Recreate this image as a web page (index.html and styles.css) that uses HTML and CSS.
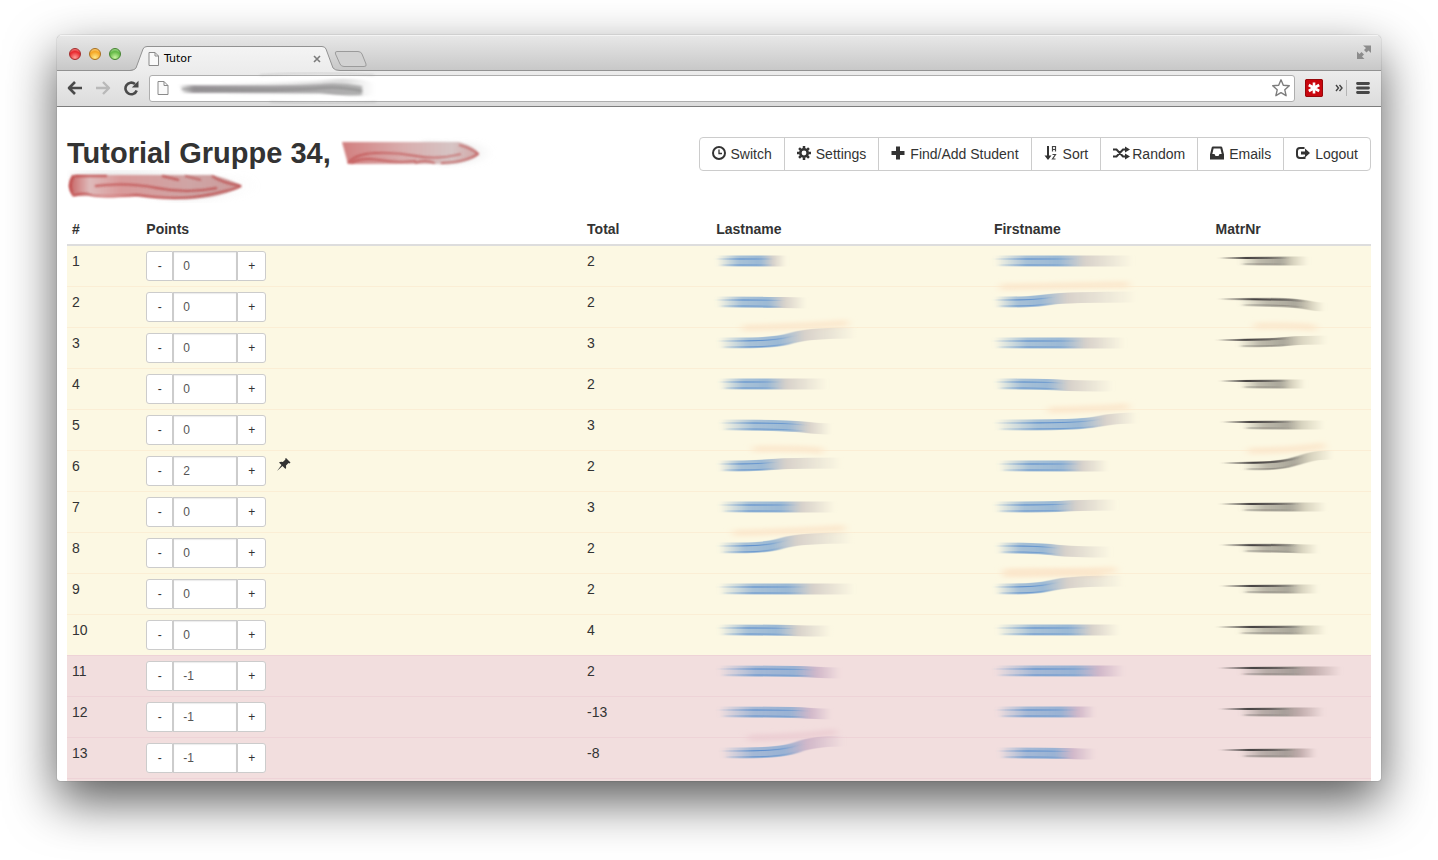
FILE: index.html
```html
<!DOCTYPE html>
<html lang="de">
<head>
<meta charset="utf-8">
<title>Tutor</title>
<link rel="stylesheet" href="styles.css">
</head>
<body>
<div class="window">
  <div class="titlebar">
    <div class="lights">
      <button class="light red" aria-label="Close"></button>
      <button class="light amber" aria-label="Minimize"></button>
      <button class="light green" aria-label="Zoom"></button>
    </div>
    <div class="tab">
      <svg class="tab-shape" width="210" height="25" viewBox="0 0 210 25" aria-hidden="true">
        <defs><linearGradient id="tabfill" x2="0" y2="1"><stop stop-color="#f4f4f4"/><stop offset="1" stop-color="#ececec"/></linearGradient></defs>
        <path d="M0 25 Q5 24 6 22 L13 3 Q14 .5 17 .5 H192 Q195 .5 196 3 L203 22 Q205 24.500 210 24.500 V25Z" fill="url(#tabfill)"/>
        <path d="M0 24.500 Q5 24 6 22 L13 3 Q14 .5 17 .5 H192 Q195 .5 196 3 L203 22 Q205 24.500 210 24.500" fill="none" stroke="#929292"/>
      </svg>
      <svg class="page-icon" width="12" height="14" viewBox="0 0 12 14" aria-hidden="true"><path d="M1 .5H7L10.500 4V13.500H1Z" fill="#fafafa" stroke="#8a8a8a"/><path d="M7 .5V4H10.500" fill="none" stroke="#8a8a8a"/></svg>
      <span class="tab-title">Tutor</span>
      <button class="tab-close" aria-label="Close tab"><svg width="8" height="8" viewBox="0 0 8 8"><path d="M1 1L7 7M7 1L1 7" stroke="#7b7b7b" stroke-width="1.600"/></svg></button>
    </div>
    <button class="new-tab" aria-label="New tab"><svg width="34" height="17" viewBox="0 0 34 17"><path d="M3 .5H24Q27 .5 28 3L32 13Q33 15.500 30 15.500H10Q7 15.500 6 13L1.500 3Q.5 .5 3 .5Z" fill="#d2d2d2" stroke="#9b9b9b"/></svg></button>
    <button class="full" aria-label="Full screen"><svg width="16" height="16" viewBox="0 0 16 16"><path d="M7 1.500H15V9L12.500 6.500L10.500 8.500L8 6L10 4ZM1 7.500L3.500 10L5.500 8L8 10.500L6 12.500L8.500 15H1Z" fill="#8c8c8c"/></svg></button>
  </div>
  <div class="toolbar">
    <button class="nav" aria-label="Back"><svg width="16" height="16" viewBox="0 0 16 16"><path d="M15 8H2.500M8 2L2 8L8 14" fill="none" stroke="#4a4a4a" stroke-width="2.600" stroke-linejoin="round"/></svg></button>
    <button class="nav" aria-label="Forward"><svg width="16" height="16" viewBox="0 0 16 16"><path d="M1 8H13.500M8 2L14 8L8 14" fill="none" stroke="#b9b9b9" stroke-width="2.400" stroke-linejoin="round"/></svg></button>
    <button class="nav" aria-label="Reload"><svg width="16" height="16" viewBox="0 0 16 16"><path d="M12 4A5.800 5.800 0 1 0 13.700 10.500" fill="none" stroke="#4a4a4a" stroke-width="2.600"/><path d="M15.500 .8V7.500H8.800Z" fill="#4a4a4a"/></svg></button>
    <div class="omnibox">
      <svg class="url-icon" width="12" height="16" viewBox="0 0 12 16" aria-hidden="true"><path d="M1 1.500H7L11 5.500V14.500H1Z" fill="#fafafa" stroke="#8a8a8a"/><path d="M7 1.500V5.500H11" fill="none" stroke="#8a8a8a"/></svg>
      <input class="url" type="text" aria-label="Address">
      <svg class="url-smear" width="215" height="32" viewBox="0 0 215 32" aria-hidden="true">
        <defs>
          <linearGradient id="us"><stop stop-color="#888" stop-opacity="0"/><stop offset=".08" stop-color="#9b979b"/><stop offset="1" stop-color="#b0b0b0"/></linearGradient>
          <linearGradient id="uf"><stop stop-color="#bbb" stop-opacity="0"/><stop offset=".8" stop-color="#bbb" stop-opacity=".5"/><stop offset="1" stop-color="#bbb" stop-opacity="0"/></linearGradient>
          <filter id="ub" filterUnits="userSpaceOnUse" x="0" y="-4" width="220" height="42"><feGaussianBlur stdDeviation="1.500 .9"/></filter>
        </defs>
        <path d="M45 10Q130 11 165 7Q195 6 205 12V23Q185 26 165 22L60 23Z" fill="url(#uf)" filter="url(#ub)"/>
        <path d="M90 3Q150 -1 204 3M100 30Q160 33 206 30" stroke="#999" stroke-opacity=".5" fill="none" filter="url(#ub)"/>
        <path d="M9 13Q120 14 150 12Q170 10 192 14V23Q170 24 150 21L13 21Z" fill="url(#us)" filter="url(#ub)"/>
        <path d="M12 17Q120 19 150 16Q170 14 192 19" stroke="#828282" stroke-opacity=".6" stroke-width="2" fill="none" filter="url(#ub)"/>
      </svg>
      <button class="star" aria-label="Bookmark"><svg width="20" height="20" viewBox="0 0 20 20"><path d="M10 1.800L12.300 7.300L18.300 7.800L13.800 11.800L15.100 17.700L10 14.600L4.900 17.700L6.200 11.800L1.700 7.800L7.700 7.300Z" fill="#fff" stroke="#7d7d7d" stroke-width="1.400" stroke-linejoin="round"/></svg></button>
    </div>
    <button class="ext" aria-label="LastPass"><svg width="18" height="18" viewBox="0 0 18 18"><rect width="18" height="18" rx="2" fill="#c9060e"/><path d="M.5 16V2Q.5 .5 2 .5H16Q17.500 .5 17.500 2V16Q17.500 17.500 16 17.500H2Q.5 17.500 .5 16" fill="none" stroke="#96080b"/><path d="M9 3.500V14.500M3.800 6L14.200 12M14.200 6L3.800 12" stroke="#fff" stroke-width="2.600"/></svg></button>
    <button class="more" aria-label="More"><svg width="8" height="8" viewBox="0 0 8 8"><path d="M1 1L3.500 4L1 7M4.500 1L7 4L4.500 7" fill="none" stroke="#444" stroke-width="1.400"/></svg></button>
    <button class="menu" aria-label="Menu"><svg width="14" height="14" viewBox="0 0 14 14"><path d="M1.500 2.500H12.500M1.500 7H12.500M1.500 11.500H12.500" stroke="#474747" stroke-width="2.800" stroke-linecap="round"/></svg></button>
  </div>
  <main class="page">
    <header class="page-head">
      <h1 class="title"><span>Tutorial Gruppe 34,</span>
        <svg width="156" height="33" viewBox="0 0 156 33" aria-hidden="true">
          <defs>
            <linearGradient id="t1"><stop stop-color="#d27f7f"/><stop offset=".45" stop-color="#d9adad"/><stop offset=".8" stop-color="#d6c4c4"/><stop offset="1" stop-color="#d2a5a5"/></linearGradient>
            <linearGradient id="t3"><stop stop-color="#ccc"/><stop offset="1" stop-color="#ddd" stop-opacity="0"/></linearGradient>
            <filter id="tb" x="-10%" y="-30%" width="120%" height="160%"><feGaussianBlur stdDeviation="1.100"/></filter>
            <filter id="tw" x="-20%" y="-60%" width="140%" height="220%"><feGaussianBlur stdDeviation="3"/></filter>
          </defs>
          <path d="M80 7H135Q152 10 154 17Q145 27 100 26Z" fill="url(#t3)" filter="url(#tw)"/>
          <path d="M1 5H118Q134 10 138 17Q130 25 108 27H7Z" fill="url(#t1)" filter="url(#tb)"/>
          <path d="M7 26Q14 17 34 16T75 19T120 17M10 26Q20 20 38 23T75 24M74 26Q83 22 94 26M100 26Q125 25 137 17Q130 11 118 8" fill="none" stroke="#bd4747" stroke-opacity=".7" stroke-width="1.800" filter="url(#tb)"/>
        </svg>
        <svg width="200" height="33" viewBox="0 0 200 33" aria-hidden="true">
          <defs><linearGradient id="t2"><stop stop-color="#c76161"/><stop offset=".12" stop-color="#dfbaba"/><stop offset=".3" stop-color="#d99a9a"/><stop offset=".7" stop-color="#cfa5a5"/><stop offset="1" stop-color="#cc9a9a"/></linearGradient></defs>
          <path d="M0 5Q80 -4 130 6H180Q196 12 194 20Q160 33 110 32Z" fill="url(#t3)" opacity=".6" filter="url(#tw)"/>
          <path d="M5 5H145Q165 10 175 16Q155 28 120 29Q90 29 70 26L6 26Q-2 16 5 5Z" fill="url(#t2)" filter="url(#tb)"/>
          <path d="M7 6Q0 15 6 25M6 26Q15 22 24 25T70 25Q110 31 140 25T174 16M95 6L112 10M118 6L134 10M145 6Q155 13 174 16M8 6H40M28 16Q60 12 90 18T150 18" fill="none" stroke="#b83434" stroke-opacity=".7" stroke-width="1.800" filter="url(#tb)"/>
        </svg>
      </h1>
      <div class="btn-group">
        <button class="btn"><svg class="ico" width="14" height="14" viewBox="0 0 14 14"><circle cx="7" cy="7" r="6" fill="none" stroke="#333" stroke-width="2"/><path d="M7 3.500V7.500H10" fill="none" stroke="#333" stroke-width="1.300"/></svg>Switch</button>
        <button class="btn"><svg class="ico" width="14" height="14" viewBox="0 0 14 14"><circle cx="7" cy="7" r="3.700" fill="none" stroke="#333" stroke-width="2.600"/><path d="M7 0V2.500M7 11.500V14M0 7H2.500M11.500 7H14M2.050 2.050L3.800 3.800M10.200 10.200L11.950 11.950M2.050 11.950L3.800 10.200M10.200 3.800L11.950 2.050" stroke="#333" stroke-width="2.500"/></svg>Settings</button>
        <button class="btn"><svg class="ico" width="14" height="14" viewBox="0 0 14 14"><path d="M7 .5V13.500M.5 7H13.500" stroke="#333" stroke-width="4"/></svg>Find/Add Student</button>
        <button class="btn"><svg class="ico" width="14" height="14" viewBox="0 0 14 14"><path d="M3 0H5V9.500H7.500L4 14L.5 9.500H3Z" fill="#333"/><path d="M8.500 5.500V.5H11.500V5.500M8.500 3.500H11.500M8.500 8.500H11.500L8.500 13H11.500" fill="none" stroke="#444" stroke-width="1.200"/></svg>Sort</button>
        <button class="btn tight"><svg class="ico" width="17" height="14" viewBox="0 0 17 14"><path d="M0 3.500H3.500L10 10.500H13M0 10.500H3.500L10 3.500H13" fill="none" stroke="#333" stroke-width="2"/><path d="M12 .5L17 3.500L12 6.500ZM12 7.500L17 10.500L12 13.500Z" fill="#333"/></svg>Random</button>
        <button class="btn"><svg class="ico" width="14" height="14" viewBox="0 0 14 14"><path fill-rule="evenodd" d="M3 .5H11Q12 .5 12.300 1.500L14 8.500V13.500H0V8.500L1.700 1.500Q2 .5 3 .5ZM3.600 2.500L2.300 8H4.500L5.500 10H8.500L9.500 8H11.700L10.400 2.500Z" fill="#333"/></svg>Emails</button>
        <button class="btn"><svg class="ico" width="14" height="14" viewBox="0 0 14 14"><path d="M8.500 2H4Q1 2 1 5V9Q1 12 4 12H8.500V10.500" fill="none" stroke="#333" stroke-width="2"/><path d="M5 5.500H9V2.500L14 7L9 11.500V8.500H5Z" fill="#333"/></svg>Logout</button>
      </div>
    </header>
    <table class="students">
      <colgroup><col class="c-num"><col class="c-points"><col class="c-total"><col class="c-last"><col class="c-first"><col class="c-matr"></colgroup>
      <thead><tr><th>#</th><th>Points</th><th>Total</th><th>Lastname</th><th>Firstname</th><th>MatrNr</th></tr></thead>
      <tbody id="rows"></tbody>
    </table>
  </main>
</div>
<script src="app.js"></script>
</body>
</html>
```
FILE: styles.css
```css
* { box-sizing: border-box; }
body {
  margin: 0;
  height: 100vh;
  padding: 35px 57px 79px;
  display: flex;
  background: #fff;
  color: #333;
  font: 14px/20px "Liberation Sans", Arial, sans-serif;
  overflow: hidden;
}
button, input { font: inherit; color: inherit; margin: 0; }
button { border: 0; background: none; padding: 0; cursor: pointer; }
svg { display: block; flex: none; }

.window {
  flex: 1;
  min-width: 0;
  display: flex;
  flex-direction: column;
  overflow: hidden;
  border-radius: 5px 5px 3px 3px;
  background: #fff;
  box-shadow: 0 0 1px rgba(0, 0, 0, .6), 0 20px 50px rgba(0, 0, 0, .65);
}

.titlebar {
  height: 36px;
  flex: none;
  display: flex;
  align-items: flex-end;
  border-bottom: 1px solid #929292;
  box-shadow: inset 0 1px #f4f4f4;
  background: linear-gradient(#e8e8e8, #c8c8c8);
}
.lights { display: flex; gap: 8px; padding: 0 0 10px 12px; }
.light {
  width: 12px;
  height: 12px;
  border-radius: 50%;
  border: 1px solid;
}
.red { border-color: #a32b2b; background: radial-gradient(circle at 50% 85%, #ff9d97, #e8262c 60%, #f5aaa5); }
.amber { border-color: #a96f1c; background: radial-gradient(circle at 50% 85%, #ffe98a, #f5a623 60%, #fbdc9d); }
.green { border-color: #44832f; background: radial-gradient(circle at 50% 85%, #c9f5a0, #62b845 60%, #bfe5b0); }

.tab {
  position: relative;
  display: flex;
  align-items: center;
  width: 210px;
  height: 25px;
  margin: 0 0 -1px 9px;
  padding: 1px 19px 0 18px;
  font: 11px/14px "DejaVu Sans", sans-serif;
  color: #000;
}
.tab-shape { position: absolute; left: 0; top: 0; }
.page-icon, .tab-title, .tab-close { position: relative; }
.tab-title { flex: 1; margin-left: 4px; }
.new-tab { margin-bottom: 2px; margin-left: -6px; position: relative; }
.full { margin: 0 9px 10px auto; }

.toolbar {
  height: 36px;
  flex: none;
  display: flex;
  align-items: center;
  padding: 0 11px 1px 10px;
  border-bottom: 1px solid #7d7d7d;
  background: linear-gradient(#ececec, #dcdcdc);
}
.nav { margin-right: 12px; }
.omnibox {
  position: relative;
  flex: 1;
  height: 27px;
  display: flex;
  align-items: center;
  margin-left: -2px;
  padding: 0 3px 0 7px;
  border: 1px solid #aeaeae;
  border-radius: 3px;
  background: #fff;
}
.url { flex: 1; min-width: 0; border: 0; outline: 0; background: none; }
.url-smear { position: absolute; left: 20px; top: -4px; }
.ext { margin: 0 12px 0 10px; }
.more { padding-right: 3px; border-right: 1px solid #b5b5b5; height: 16px; }
.menu { margin-left: 9px; }

.page { flex: 1; min-height: 0; overflow: hidden; padding: 30px 10px 0; }
.page-head { display: flex; justify-content: space-between; align-items: flex-start; margin-bottom: 11px; }
.title {
  display: flex;
  flex-wrap: wrap;
  flex: 0 1 540px;
  margin: 0;
  font-size: 29px;
  line-height: 33px;
  font-weight: 700;
}
.title span { margin-right: 10px; }
.btn-group { display: flex; flex: none; }
.btn {
  display: flex;
  align-items: center;
  gap: 5px;
  height: 34px;
  padding: 0 12px;
  border: 1px solid #ccc;
  background: #fff;
}
.btn + .btn { margin-left: -1px; }
.btn:first-child { border-radius: 4px 0 0 4px; }
.btn:last-child { border-radius: 0 4px 4px 0; }
.tight { gap: 2px; }
.ico { margin-bottom: 2px; }

.students { width: 100%; table-layout: fixed; border-collapse: separate; border-spacing: 0; }
.c-num { width: 5.7%; }
.c-points { width: 33.8%; }
.c-total { width: 9.9%; }
.c-last { width: 21.3%; }
.c-first { width: 17%; }
.c-matr { width: 12.3%; }
th { padding: 5px; text-align: left; border-bottom: 2px solid #ddd; }
td { padding: 5px; vertical-align: top; border-top: 1px solid #fbeed5; background: #fcf8e3; }
tr:first-child td { border-top: 0; }
.danger td { background: #f2dede; border-color: #eed3d7; }
.points { display: flex; align-items: flex-start; }
.step, .score {
  height: 30px;
  border: 1px solid #ccc;
  background: #fff;
  font-size: 12px;
}
.minus { width: 27px; border-radius: 3px 0 0 3px; }
.plus { width: 29px; border-radius: 0 3px 3px 0; }
.score {
  width: 64px;
  padding: 0 9px;
  color: #555;
  border-radius: 0;
  outline: 0;
  box-shadow: inset 0 1px 1px rgba(0, 0, 0, .08);
}
.pin { margin-left: 10px; }
.smear { overflow: visible; }
```
FILE: app.js
```javascript
// score, total, then one smear per hidden field: [start, solid end, tail end, bend]
const rows = [
  [0, 2, [1, 54, 70, 0], [1, 79, 139, 0], [3, 68, 92, 0]],
  [0, 2, [1, 63, 90, 1], [1, 56, 143, -5], [3, 88, 108, 5]],
  [0, 3, [3, 76, 140, -10], [0, 83, 131, 0], [1, 70, 111, -3]],
  [0, 2, [4, 61, 111, 0], [2, 65, 119, 2], [4, 67, 89, 0]],
  [0, 3, [5, 87, 115, 4], [2, 104, 143, -7], [6, 73, 108, 0]],
  [2, 2, [3, 56, 126, -3], [5, 82, 114, 0], [6, 82, 117, -11]],
  [0, 3, [4, 78, 119, 0], [1, 73, 123, -2], [4, 78, 110, 0]],
  [0, 2, [3, 67, 137, -10], [3, 60, 117, 4], [5, 76, 102, 1]],
  [0, 2, [3, 87, 138, 0], [1, 60, 130, -8], [5, 76, 102, 0]],
  [0, 4, [3, 74, 115, 1], [3, 91, 125, 0], [1, 82, 110, 0]],
  [-1, 2, [3, 95, 124, 2], [1, 99, 130, 0], [3, 82, 125, 0]],
  [-1, -13, [3, 89, 115, 2], [3, 80, 101, 0], [4, 71, 108, 0]],
  [-1, -8, [6, 82, 128, -12], [5, 73, 101, 1], [4, 75, 100, 0]]
];

let id = 0;
function smear([a, b, c, bend], dark, danger) {
  id++;
  const body = dark ? "#7f7c74" : "#7ba4d0";
  const line = dark ? "#444040" : "#4f86cb";
  const tail = dark ? (danger ? "#b5a0a0" : "#cfcab6") : (danger ? "#c9aec4" : "#cfc8c4");
  const mid = (b - a) / (c - a);
  const start = dark ? a + 20 : a;
  const lean = bend / 2;
  const curve = (x, y) => `M${x} ${y}C${(x + b) / 2} ${y} ${b - 16} ${y} ${b} ${y + lean}S${c - 12} ${y + bend} ${c} ${y + bend}`;
  const edge = bend < 0 ? -5 : 34;
  const pull = Math.abs(bend) > 3
    ? `<path d="M${b - 50} ${edge}Q${b} ${edge - 1} ${c - 8} ${edge + lean}" fill="none" stroke="${danger ? "#ebccd2" : "#fbe6cb"}" stroke-opacity=".8" stroke-width="7" filter="url(#p${id})"/>` : "";
  return `<svg class="smear" width="150" height="20" viewBox="0 0 150 20" aria-hidden="true"><defs>
    <linearGradient id="g${id}" gradientUnits="userSpaceOnUse" x1="${start}" x2="${c}">
      <stop stop-color="${body}" stop-opacity="0"/><stop offset="${mid * .4}" stop-color="${body}" stop-opacity="${dark ? .5 : .65}"/>
      <stop offset="${mid * .82}" stop-color="${body}" stop-opacity="${dark ? .65 : .75}"/><stop offset="${mid + (1 - mid) * .2}" stop-color="${tail}" stop-opacity=".8"/>
      <stop offset="1" stop-color="${tail}" stop-opacity="0"/></linearGradient>
    <linearGradient id="l${id}" gradientUnits="userSpaceOnUse" x1="${a}" x2="${b + 4}">
      <stop stop-color="${line}" stop-opacity="${dark ? 0 : .1}"/><stop offset=".4" stop-color="${line}"/><stop offset=".7" stop-color="${line}" stop-opacity=".7"/><stop offset="1" stop-color="${line}" stop-opacity="0"/></linearGradient>
    <filter id="f${id}" filterUnits="userSpaceOnUse" x="-10" y="-20" width="170" height="60"><feGaussianBlur stdDeviation="2 .6"/></filter>
    <filter id="p${id}" filterUnits="userSpaceOnUse" x="-10" y="-25" width="170" height="80"><feGaussianBlur stdDeviation="4 2"/></filter></defs>
    ${pull}
    <path d="${curve(start, 10)}" fill="none" stroke="url(#g${id})" stroke-width="${dark ? 9 : 11}" filter="url(#f${id})"/>
    <path d="${curve(a, dark ? 7 : 8)}" fill="none" stroke="url(#l${id})" stroke-width="${dark ? 2 : 1}" filter="url(#f${id})"/>
    <path d="${curve(start + 5, dark ? 13 : 14)}" fill="none" stroke="url(#l${id})" stroke-opacity="${dark ? .45 : .8}" filter="url(#f${id})"/>
  </svg>`;
}

const pin = `<svg class="pin" width="16" height="16" viewBox="0 0 16 16" role="img" aria-label="Pinned"><path d="M10 2L14.500 6.500L13.500 7.500L12.500 7L10 9.500Q10.500 11.500 9.500 13L6.500 10L1 15L5.500 9L3 6.500Q4.500 5.500 6.800 6L9.500 3.500L9 3Z" fill="#333"/></svg>`;

document.getElementById("rows").innerHTML = rows.map(([score, total, last, first, matr], i) => {
  const n = i + 1, bad = score < 0;
  return `<tr class="${bad ? "danger" : "warning"}"><td>${n}</td>
    <td><div class="points"><button class="step minus" aria-label="Decrease">-</button><input class="score" type="text" value="${score}" aria-label="Points ${n}"><button class="step plus" aria-label="Increase">+</button>${n === 6 ? pin : ""}</div></td>
    <td>${total}</td><td>${smear(last, false, bad)}</td><td>${smear(first, false, bad)}</td><td>${smear(matr, true, bad)}</td></tr>`;
}).join("") + `<tr class="danger"><td colspan="6"></td></tr>`;
```
